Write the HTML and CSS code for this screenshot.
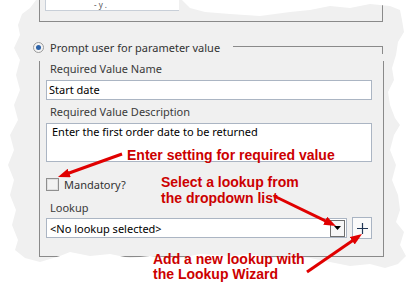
FILE: index.html
```html
<!DOCTYPE html>
<html lang="en">
  <head>
    <meta charset="UTF-8" />
    <title>Required Value</title>
    <link rel="stylesheet" href="styles.css">
  </head>
  <body>
    <div class="screen">
      <!-- torn grey dialog fragment -->
      <div class="panel">
        <div class="prev-group">
          <div class="prev-field"><span>- y .</span></div>
        </div>

        <div class="legend-row">
          <span class="radio"><span class="radio-dot"></span></span>
          <span class="legend-text">Prompt user for parameter value</span>
          <span class="legend-line"></span>
        </div>

        <div class="group-body">
          <div class="field-label first">Required Value Name</div>
          <div class="textbox">Start date</div>

          <div class="field-label">Required Value Description</div>
          <div class="textbox textarea">Enter the first order date to be returned</div>

          <div class="check-row">
            <span class="checkbox"></span>
            <span class="check-text">Mandatory?</span>
          </div>

          <div class="field-label lookup-label">Lookup</div>
          <div class="lookup-row">
            <div class="combo">
              <span class="combo-text">&lt;No lookup selected&gt;</span>
              <span class="combo-btn">
                <svg width="7" height="4" viewBox="0 0 7 4"><path d="M0 0h7L3.5 4z" fill="#000"/></svg>
              </span>
            </div>
            <div class="add-btn">
              <svg width="11" height="11" viewBox="0 0 11 11"><path d="M5.5 0v11M0 5.5h11" stroke="#1f3554" stroke-width="1.2"/></svg>
            </div>
          </div>
        </div>
      </div>

      <!-- callouts -->
      <div class="note note-required">Enter setting for required value</div>
      <div class="note note-select">Select a lookup from<br>the dropdown list</div>
      <div class="note note-add">Add a new lookup with<br>the Lookup Wizard</div>

      <svg class="arrows" width="420" height="282" viewBox="0 0 420 282">
        <defs>
          <marker id="head" markerWidth="4" markerHeight="3" refX="2" refY="1.5" orient="auto">
            <path d="M0 0L4 1.5L0 3z" fill="#e00000"/>
          </marker>
        </defs>
        <line x1="122" y1="154" x2="63.6" y2="175" stroke="#e00000" stroke-width="3" marker-end="url(#head)"/>
        <line x1="274" y1="196" x2="330.6" y2="223.4" stroke="#e00000" stroke-width="3" marker-end="url(#head)"/>
        <line x1="307" y1="272" x2="357.1" y2="237.4" stroke="#e00000" stroke-width="3" marker-end="url(#head)"/>
      </svg>
    </div>
  </body>
</html>
```

FILE: styles.css
```css
body {
  margin: 0;
  background-color: #ffffff;
  font-family: "Noto Sans", "Open Sans", sans-serif;
  font-size: 11px;
  color: #333333;
}

.screen {
  position: relative;
  width: 420px;
  height: 282px;
  overflow: hidden;
}

/* grey window piece with ragged edges */
.panel {
  box-sizing: border-box;
  width: 420px;
  height: 282px;
  padding-left: 39px;
  background-color: #f0f0f0;
  clip-path: polygon(
    22px 14px, 30px 8px, 36px 0px, 182px 0px, 190px 8px, 205px 12px, 230px 14px,
    260px 16px, 290px 12px, 310px 10px, 330px 6px, 350px 8px, 370px 4px, 390px 6px,
    400px 10px, 402px 20px, 404px 32px, 398px 42px, 396px 55px, 392px 68px,
    394px 80px, 388px 92px, 390px 105px, 395px 118px, 400px 125px, 394px 135px,
    390px 150px, 396px 165px, 392px 180px, 398px 195px, 400px 210px, 396px 222px,
    404px 232px, 400px 245px, 406px 256px, 398px 264px, 385px 268px, 370px 264px,
    350px 266px, 330px 262px, 310px 258px, 290px 256px, 270px 258px, 250px 254px,
    230px 256px, 200px 254px, 180px 258px, 150px 256px, 130px 258px, 110px 254px,
    90px 256px, 70px 252px, 60px 256px, 40px 262px, 25px 258px, 15px 250px,
    18px 240px, 12px 225px, 16px 210px, 10px 195px, 14px 180px, 8px 165px,
    14px 150px, 10px 135px, 18px 120px, 14px 105px, 20px 90px, 16px 75px,
    20px 60px, 14px 48px, 20px 35px, 18px 25px
  );
}

.prev-group {
  width: 337px;
  height: 21px;
  padding-left: 5px;
  border: 1px solid #8a8a8a;
  border-top: none;
}

.prev-field {
  box-sizing: border-box;
  width: 134px;
  height: 11px;
  padding-left: 48px;
  background-color: #ffffff;
  border-left: 1px solid #c8cfd8;
  border-bottom: 1px solid #c8cfd8;
  overflow: hidden;
  font-size: 8px;
  line-height: 9px;
  color: #555555;
}

.legend-row {
  display: flex;
  align-items: center;
  width: 344px;
  height: 13px;
  margin-top: 19px;
}

.radio {
  width: 11px;
  height: 11px;
  box-sizing: border-box;
  margin-left: -6px;
  margin-right: 6px;
  border: 1px solid #9a9a9a;
  border-radius: 50%;
  background-color: #f4f4f4;
  display: flex;
  align-items: center;
  justify-content: center;
}

.radio-dot {
  width: 5px;
  height: 5px;
  border-radius: 50%;
  background-color: #2c62a8;
}

.legend-line {
  flex: 1;
  align-self: flex-end;
  height: 7px;
  margin-left: 13px;
  border-top: 1px solid #8a8a8a;
  border-right: 1px solid #8a8a8a;
}

.group-body {
  width: 327px;
  height: 195px;
  padding: 0 10px 0 6px;
  border: 1px solid #8a8a8a;
  border-top: none;
}

.field-label {
  padding-left: 4px;
  line-height: 16px;
  margin-top: 4px;
  color: #3a3a3a;
}

.field-label.first {
  margin-top: 7px;
}

.textbox {
  box-sizing: border-box;
  width: 326px;
  height: 20px;
  margin-top: 3px;
  padding-left: 2px;
  line-height: 18px;
  background-color: #ffffff;
  border: 1px solid #abb5c3;
  color: #000000;
}

.textarea {
  height: 39px;
  padding-left: 5px;
  line-height: 16px;
}

.check-row {
  display: flex;
  align-items: center;
  height: 16px;
  margin-top: 14px;
}

.checkbox {
  width: 13px;
  height: 13px;
  box-sizing: border-box;
  border: 1px solid #8f8f8f;
  background-color: #f2f2f2;
  box-shadow: inset 0 0 0 1px #e0e0e0;
  margin-right: 5px;
}

.lookup-label {
  margin-top: 8px;
}

.lookup-row {
  display: flex;
  align-items: center;
  height: 22px;
  margin-top: 1px;
}

.combo {
  box-sizing: border-box;
  width: 301px;
  height: 20px;
  display: flex;
  align-items: center;
  justify-content: space-between;
  background-color: #ffffff;
  border: 1px solid #abb5c3;
  color: #000000;
}

.combo-text {
  padding-left: 3px;
}

.combo-btn {
  box-sizing: border-box;
  width: 15px;
  height: 17px;
  margin-right: 1px;
  display: flex;
  align-items: center;
  justify-content: center;
  border: 1px solid #6e6e6e;
  background-color: #f6f6f6;
}

.add-btn {
  box-sizing: border-box;
  width: 20px;
  height: 22px;
  margin-left: 5px;
  display: flex;
  align-items: center;
  justify-content: center;
  border: 1px solid #a9b4c3;
  background-color: #fafafa;
}

/* red annotations drawn over the screenshot */
.note {
  position: absolute;
  font-family: "Liberation Sans", Arial, sans-serif;
  font-weight: bold;
  font-size: 14px;
  line-height: 16px;
  color: #cc0000;
  white-space: nowrap;
}

.note-required {
  left: 127px;
  top: 147px;
}

.note-select {
  left: 161px;
  top: 174px;
}

.note-add {
  left: 153px;
  top: 252px;
  line-height: 15px;
}

.arrows {
  position: absolute;
  left: 0;
  top: 0;
  pointer-events: none;
}
```
